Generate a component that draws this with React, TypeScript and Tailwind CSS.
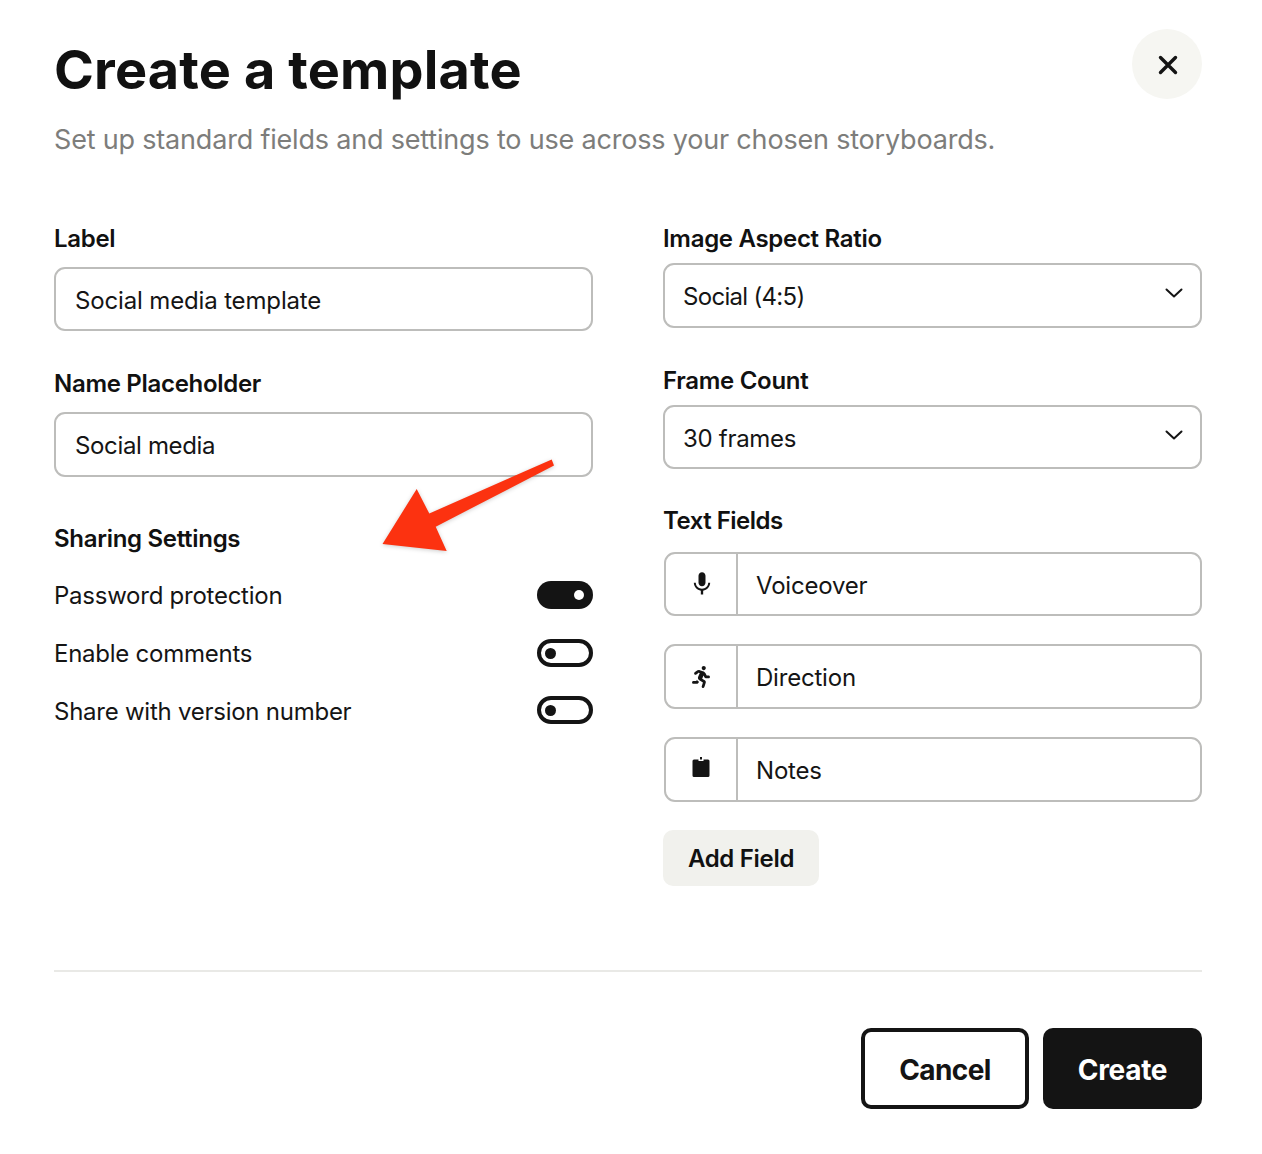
import React from "react";
import { MdMic } from "react-icons/md";
import { FaRunning } from "react-icons/fa";

const font = { fontFamily: "Inter, 'Noto Sans', sans-serif" };

function Label({ children, className = "" }: { children: React.ReactNode; className?: string }) {
  return <div className={`text-[24px] leading-[30px] font-semibold tracking-[-0.3px] text-[#111] ${className}`}>{children}</div>;
}

function Box({ children, className = "" }: { children: React.ReactNode; className?: string }) {
  return <div className={`border-2 border-[#bdbdbb] rounded-[11px] flex items-center text-[24px] tracking-[-0.2px] text-[#151515] bg-white ${className}`}>{children}</div>;
}

function Select({ value, className = "", textClass = "" }: { value: string; className?: string; textClass?: string }) {
  return (
    <Box className={`justify-between pl-[18px] pr-[16px] ${className}`}>
      <span className={`pt-[3px] ${textClass}`}>{value}</span>
      <svg width="20" height="12" viewBox="0 0 20 12" fill="none" className="mb-[5px]">
        <path d="M2.5 2.5 L10 9.5 L17.5 2.5" stroke="#151515" strokeWidth="2" strokeLinecap="round" strokeLinejoin="round" />
      </svg>
    </Box>
  );
}

function Toggle({ on }: { on?: boolean }) {
  return on ? (
    <div className="w-[56px] h-[28px] mb-[2px] rounded-full bg-[#141414] flex items-center justify-end pr-[9px]">
      <div className="w-[10px] h-[10px] rounded-full bg-white" />
    </div>
  ) : (
    <div className="w-[56px] h-[28px] mb-[2px] rounded-full border-[4px] border-[#141414] bg-white flex items-center pl-[4px]">
      <div className="w-[11px] h-[11px] rounded-full bg-[#141414]" />
    </div>
  );
}

function Row({ text, on, className = "", toggleClass = "" }: { text: string; on?: boolean; className?: string; toggleClass?: string }) {
  return (
    <div className={`flex items-center justify-between h-[30px] text-[24px] tracking-[-0.25px] text-[#151515] ${className}`}>
      <span>{text}</span>
      <div className={toggleClass}>
        <Toggle on={on} />
      </div>
    </div>
  );
}

function Field({ icon, text, className = "", textClass = "pt-[4px]" }: { icon: React.ReactNode; text: string; className?: string; textClass?: string }) {
  return (
    <Box className={`items-stretch ml-[1px] ${className}`}>
      <div className="w-[72px] shrink-0 border-r-2 border-[#bdbdbb] flex items-center justify-center">{icon}</div>
      <div className={`flex items-center pl-[18px] ${textClass}`}>{text}</div>
    </Box>
  );
}

export default function App() {
  return (
    <div style={font} className="relative w-[1262px] h-[1154px] bg-white overflow-hidden px-[54px] pt-[30px]">
      <div className="w-[1148px]">
        <div className="flex justify-between items-start h-[100px]">
          <h1 className="text-[54px] leading-[80px] font-bold tracking-[0.15px] text-[#111]">Create a template</h1>
          <button className="w-[70px] h-[70px] -mt-[1px] rounded-full bg-[#f6f6f2] flex items-center justify-center">
            <svg width="22" height="22" viewBox="0 0 22 22" fill="none" className="ml-[2px] mt-[2px]">
              <path d="M3.5 3.5 L18.5 18.5 M18.5 3.5 L3.5 18.5" stroke="#141414" strokeWidth="3.4" strokeLinecap="round" />
            </svg>
          </button>
        </div>
        <p className="text-[27px] leading-[36px] tracking-[-0.19px] text-[#7d7d7b] -mt-[8px]">
          Set up standard fields and settings to use across your chosen storyboards.
        </p>

        <div className="grid grid-cols-[539px_539px] gap-x-[70px] mt-[66px]">
          <div>
            <Label>Label</Label>
            <Box className="h-[64px] mt-[13px] pl-[19px]"><span className="pt-[4px] tracking-[-0.15px]">Social media template</span></Box>
            <Label className="mt-[38px]">Name Placeholder</Label>
            <Box className="h-[65px] mt-[13px] pl-[19px]"><span className="pt-[2px] tracking-[-0.35px]">Social media</span></Box>
            <Label className="mt-[47px]">Sharing Settings</Label>
            <Row text="Password protection" on className="mt-[27px]" />
            <Row text="Enable comments" className="mt-[28px]" />
            <Row text="Share with version number" className="mt-[28px]" toggleClass="-mt-[2px]" />
          </div>
          <div>
            <Label>Image Aspect Ratio</Label>
            <Select value="Social (4:5)" textClass="tracking-[-0.7px]" className="h-[65px] mt-[9px]" />
            <Label className="mt-[38px]">Frame Count</Label>
            <Select value="30 frames" textClass="tracking-[-0.3px]" className="h-[64px] mt-[9px]" />
            <Label className="mt-[37px] tracking-[-0.5px]">Text Fields</Label>
            <div className="flex flex-col mt-[16px]">
              <Field className="h-[64px]" text="Voiceover" icon={<MdMic size={28} color="#141414" className="ml-[1px]" />} />
              <Field className="h-[65px] mt-[28px]" textClass="pt-[2px]" text="Direction" icon={<FaRunning size={22} color="#141414" />} />
              <Field
                className="h-[65px] mt-[28px]"
                textClass="pt-[2px]"
                text="Notes"
                icon={
                  <svg width="18" height="22" viewBox="0 0 18 22" className="mb-[5px] mr-[1px]">
                    <path d="M2 3.5 H6.5 V5 H11.5 V3.5 H16 A1.5 1.5 0 0 1 17.5 5 V19.5 A1.5 1.5 0 0 1 16 21 H2 A1.5 1.5 0 0 1 0.5 19.5 V5 A1.5 1.5 0 0 1 2 3.5 Z M8 1 H10 V3.5 H8 Z" fill="#141414" />
                  </svg>
                }
              />
            </div>
            <button className="mt-[28px] w-[156px] h-[56px] pt-[2px] rounded-[10px] bg-[#f1f1ed] text-[24px] font-semibold tracking-[-0.3px] text-[#111]">
              Add Field
            </button>
          </div>
        </div>

        <div className="h-[2px] bg-[#e9e9e6] mt-[84px]" />
        <div className="flex justify-end gap-[14px] mt-[56px]">
          <button className="w-[168px] h-[81px] pt-[2px] rounded-[10px] border-[4px] border-[#141414] bg-white text-[28px] font-bold tracking-[-0.6px] text-[#141414]">Cancel</button>
          <button className="w-[159px] h-[81px] pt-[2px] rounded-[10px] bg-[#141414] text-[28px] font-bold tracking-[-0.3px] text-white">Create</button>
        </div>
      </div>

      <svg className="absolute left-0 top-0 pointer-events-none" width="1262" height="1154" viewBox="0 0 1262 1154" style={{ filter: "drop-shadow(0 1px 2px rgba(0,0,0,0.2))" }}>
        <polygon points="382.5,544 416.7,489 429.3,513.5 551.7,459.5 554,465.5 435.7,526.7 446.7,551" fill="#fc3210" />
      </svg>
    </div>
  );
}
